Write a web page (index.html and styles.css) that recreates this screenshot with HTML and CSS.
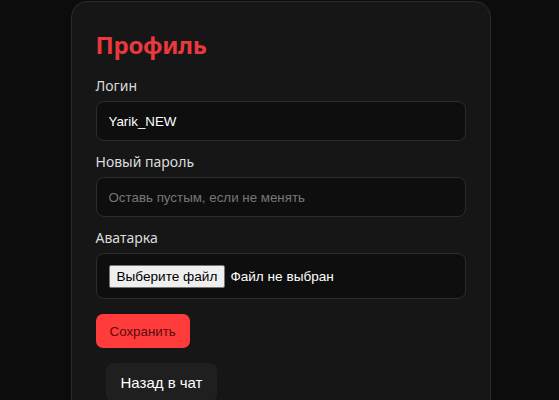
FILE: index.html
```html
<!DOCTYPE html>
<html lang="ru">
<head>
    <meta charset="UTF-8">
    <meta name="viewport" content="width=device-width, initial-scale=1.0">
    <title>Профиль</title>
    <link rel="stylesheet" href="styles.css">
</head>
<body>
    <div class="card">
        <h2 class="title">Профиль</h2>
        <form class="form" onsubmit="return false;">
            <label class="label" for="login">Логин</label>
            <input class="field" id="login" type="text" value="Yarik_NEW">

            <label class="label" for="pass">Новый пароль</label>
            <input class="field" id="pass" type="password" placeholder="Оставь пустым, если не менять">

            <label class="label" for="avatar">Аватарка</label>
            <div class="field file">
                <span class="file-btn">Выберите файл</span>
                <span class="file-name">Файл не выбран</span>
            </div>

            <button class="save" type="submit">Сохранить</button>
        </form>
        <a href="#" class="back">Назад в чат</a>
    </div>
</body>
</html>
```

FILE: styles.css
```css
* {
    box-sizing: border-box;
}

body {
    margin: 0;
    padding: 1px 0 0 2px;
    background: #0c0c0c;
    font-family: "Noto Sans", "Liberation Sans", sans-serif;
    color: #e6e6e6;
}

.card {
    width: 420px;
    margin: 0 auto;
    padding: 24px 24px 40px;
    background: #161616;
    border: 1px solid #2a2a2a;
    border-radius: 16px;
}

.title {
    margin: 0 0 12px;
    font-size: 24px;
    line-height: 38px;
    font-weight: 700;
    letter-spacing: -0.3px;
    color: #e8393d;
}

.form {
    display: flex;
    flex-direction: column;
}

.label {
    font-size: 14px;
    line-height: 20px;
    margin-bottom: 5px;
    color: #dcdcdc;
}

.field {
    height: 40px;
    padding: 0 12px;
    margin-bottom: 11px;
    background: #0e0e0e;
    border: 1px solid #2c2c2c;
    border-radius: 8px;
    color: #fff;
    font: 13.333px "Liberation Sans", Arial, sans-serif;
    outline: none;
}

.field::placeholder {
    color: #777;
}

.file {
    height: 46px;
    display: flex;
    align-items: center;
    gap: 5px;
    margin-bottom: 15px;
}

.file-btn {
    padding: 3px 7px;
    background: #efefef;
    color: #000;
    border: 1px solid #767676;
    border-radius: 2px;
    font-size: 13.6px;
}

.file-name {
    color: #fff;
    font-size: 13.6px;
}

.save {
    align-self: flex-start;
    height: 34px;
    padding: 0 14px;
    background: #ff3b3b;
    color: #5a0b0b;
    border: none;
    border-radius: 7px;
    font: 13.333px "Liberation Sans", Arial, sans-serif;
}

.back {
    display: inline-block;
    margin: 15px 0 0 10px;
    padding: 11px 15px;
    background: #1f1f1f;
    border-radius: 8px;
    color: #fff;
    text-decoration: none;
    font: 15px "Liberation Sans", Arial, sans-serif;
}
```
